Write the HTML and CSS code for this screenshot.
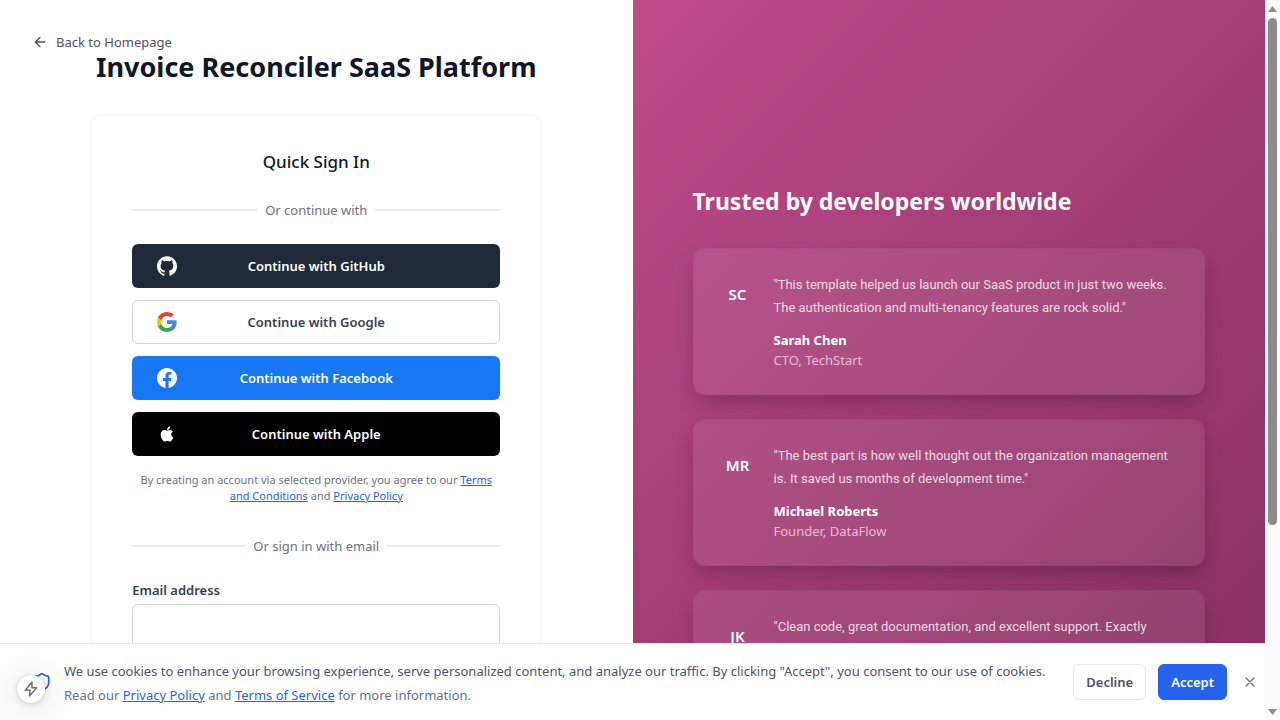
FILE: index.html
```html
<!DOCTYPE html>
<html lang="en">
<head>
<meta charset="utf-8">
<meta name="viewport" content="width=device-width, initial-scale=1">
<title>Invoice Reconciler SaaS Platform</title>
<link rel="stylesheet" href="styles.css">
</head>
<body>
<div class="shell">
  <div class="page">
    <main class="signin">
      <a class="back" href="#">
        <svg class="back-icon" viewBox="0 0 24 24" fill="none" stroke="currentColor" stroke-width="2" stroke-linecap="round" stroke-linejoin="round"><path d="m12 19-7-7 7-7M19 12H5"/></svg>
        Back to Homepage
      </a>
      <h1 class="title">Invoice Reconciler SaaS Platform</h1>
      <section class="card">
        <h2 class="card-title">Quick Sign In</h2>
        <div class="divider"><span>Or continue with</span></div>
        <div class="providers">
          <button class="provider github" type="button">
            <svg viewBox="0 0 24 24" fill="currentColor"><path d="M12 .297c-6.63 0-12 5.373-12 12 0 5.303 3.438 9.8 8.205 11.385.6.113.82-.258.82-.577 0-.285-.01-1.04-.015-2.04-3.338.724-4.042-1.61-4.042-1.61C4.422 18.07 3.633 17.7 3.633 17.7c-1.087-.744.084-.729.084-.729 1.205.084 1.838 1.236 1.838 1.236 1.07 1.835 2.809 1.305 3.495.998.108-.776.417-1.305.76-1.605-2.665-.3-5.466-1.332-5.466-5.93 0-1.31.465-2.38 1.235-3.22-.135-.303-.54-1.523.105-3.176 0 0 1.005-.322 3.3 1.23.96-.267 1.98-.399 3-.405 1.02.006 2.04.138 3 .405 2.28-1.552 3.285-1.23 3.285-1.23.645 1.653.24 2.873.12 3.176.765.84 1.23 1.91 1.23 3.22 0 4.61-2.805 5.625-5.475 5.92.42.36.81 1.096.81 2.22 0 1.606-.015 2.896-.015 3.286 0 .315.21.69.825.57C20.565 22.092 24 17.592 24 12.297c0-6.627-5.373-12-12-12"/></svg>
            <span>Continue with GitHub</span>
          </button>
          <button class="provider google" type="button">
            <svg viewBox="1 1 22 22"><path fill="#4285F4" d="M22.56 12.25c0-.78-.07-1.53-.2-2.25H12v4.26h5.92c-.26 1.37-1.04 2.53-2.21 3.31v2.77h3.57c2.08-1.92 3.28-4.74 3.28-8.09z"/><path fill="#34A853" d="M12 23c2.97 0 5.46-.98 7.28-2.66l-3.57-2.77c-.98.66-2.23 1.06-3.71 1.06-2.86 0-5.29-1.93-6.16-4.53H2.18v2.84C3.99 20.53 7.7 23 12 23z"/><path fill="#FBBC05" d="M5.84 14.09c-.22-.66-.35-1.36-.35-2.09s.13-1.43.35-2.09V7.07H2.18C1.43 8.55 1 10.22 1 12s.43 3.45 1.18 4.93l3.66-2.84z"/><path fill="#EA4335" d="M12 5.38c1.62 0 3.06.56 4.21 1.64l3.15-3.15C17.45 2.09 14.97 1 12 1 7.7 1 3.99 3.47 2.18 7.07l3.66 2.84c.87-2.6 3.3-4.53 6.16-4.53z"/></svg>
            <span>Continue with Google</span>
          </button>
          <button class="provider facebook" type="button">
            <svg viewBox="0 0 24 24" fill="currentColor"><path d="M24 12.073c0-6.627-5.373-12-12-12s-12 5.373-12 12c0 5.99 4.388 10.954 10.125 11.854v-8.385H7.078v-3.47h3.047V9.43c0-3.007 1.792-4.669 4.533-4.669 1.312 0 2.686.235 2.686.235v2.953H15.83c-1.491 0-1.956.925-1.956 1.874v2.25h3.328l-.532 3.47h-2.796v8.385C19.612 23.027 24 18.062 24 12.073z"/></svg>
            <span>Continue with Facebook</span>
          </button>
          <button class="provider apple" type="button">
            <svg viewBox="0 0 24 24" fill="currentColor"><path d="M17.05 20.28c-.98.95-2.05.8-3.08.35-1.09-.46-2.09-.48-3.24 0-1.44.62-2.2.44-3.06-.35C2.79 15.25 3.51 7.59 9.05 7.31c1.35.07 2.29.74 3.08.8 1.18-.24 2.31-.93 3.57-.84 1.51.12 2.65.72 3.4 1.8-3.12 1.87-2.38 5.98.48 7.13-.57 1.5-1.31 2.99-2.54 4.09zM12.03 7.25c-.15-2.23 1.66-4.07 3.74-4.25.29 2.58-2.34 4.5-3.74 4.25z"/></svg>
            <span>Continue with Apple</span>
          </button>
        </div>
        <p class="terms">By creating an account via selected provider, you agree to our <a href="#">Terms and Conditions</a> and <a href="#">Privacy Policy</a></p>
        <div class="divider"><span>Or sign in with email</span></div>
        <form class="form">
          <label for="email">Email address</label>
          <input id="email" type="email">
        </form>
      </section>
    </main>

    <aside class="praise">
      <h2 class="praise-title">Trusted by developers worldwide</h2>
      <article class="quote">
        <div class="avatar">SC</div>
        <div class="quote-body">
          <p class="quote-text">"This template helped us launch our SaaS product in just two weeks. The authentication and multi-tenancy features are rock solid."</p>
          <p class="name">Sarah Chen</p>
          <p class="role">CTO, TechStart</p>
        </div>
      </article>
      <article class="quote">
        <div class="avatar">MR</div>
        <div class="quote-body">
          <p class="quote-text">"The best part is how well thought out the organization management is. It saved us months of development time."</p>
          <p class="name">Michael Roberts</p>
          <p class="role">Founder, DataFlow</p>
        </div>
      </article>
      <article class="quote">
        <div class="avatar">JK</div>
        <div class="quote-body">
          <p class="quote-text">"Clean code, great documentation, and excellent support. Exactly</p>
        </div>
      </article>
    </aside>

    <section class="cookies" aria-label="Cookie consent">
      <svg class="shield" viewBox="0 0 24 24" fill="none" stroke="currentColor" stroke-width="2" stroke-linecap="round" stroke-linejoin="round"><path d="M20 13c0 5-3.500 7.500-7.660 8.950a1 1 0 0 1-.67-.01C7.500 20.500 4 18 4 13V6a1 1 0 0 1 1-1c2 0 4.500-1.200 6.240-2.720a1.170 1.170 0 0 1 1.520 0C14.510 3.810 17 5 19 5a1 1 0 0 1 1 1z"/></svg>
      <div class="cookies-text">
        <p>We use cookies to enhance your browsing experience, serve personalized content, and analyze our traffic. By clicking "Accept", you consent to our use of cookies.</p>
        <p class="muted">Read our <a href="#">Privacy Policy</a> and <a href="#">Terms of Service</a> for more information.</p>
      </div>
      <button class="btn decline" type="button">Decline</button>
      <button class="btn accept" type="button">Accept</button>
      <button class="close" type="button" aria-label="Close">
        <svg viewBox="0 0 24 24" fill="none" stroke="currentColor" stroke-width="2" stroke-linecap="round"><path d="M18 6 6 18M6 6l12 12"/></svg>
      </button>
    </section>

    <button class="bolt" type="button" aria-label="Developer tools">
      <svg viewBox="0 0 16 16" fill="none" stroke="currentColor" stroke-width="1.500" stroke-linejoin="round"><path d="M9 1 2.300 9.300H7L6.500 15 13.700 6.700H9z"/></svg>
    </button>
  </div>

  <div class="scrollbar" aria-hidden="true">
    <svg class="arrow" viewBox="0 0 11 8"><path d="M5.500 1 10 7H1z"/></svg>
    <div class="track"><div class="thumb"></div></div>
    <svg class="arrow" viewBox="0 0 11 8"><path d="M1 1h9L5.500 7z"/></svg>
  </div>
</div>
</body>
</html>
```
FILE: styles.css
```css
* { box-sizing: border-box; }

body {
  margin: 0;
  font-family: "Noto Sans", "Open Sans", sans-serif;
  font-size: 13px;
  line-height: 20px;
  color: #111827;
  background: #fff;
}

h1, h2, p { margin: 0; }
button { font: inherit; cursor: pointer; }
a { color: #2563eb; }

.shell { display: flex; height: 100vh; overflow: hidden; }

.page {
  position: relative;
  flex: 1;
  min-width: 0;
  display: grid;
  grid-template-columns: 1fr 1fr;
  overflow: hidden;
}

.signin {
  position: relative;
  padding: 48px 32px 0;
  display: flex;
  flex-direction: column;
  align-items: center;
}

.back {
  position: absolute;
  left: 32px;
  top: 32px;
  display: flex;
  align-items: center;
  gap: 8px;
  color: #4b5563;
  text-decoration: none;
}
.back-icon { width: 16px; height: 16px; }

.title {
  font-size: 27px;
  line-height: 38px;
  font-weight: 700;
  color: #0f172a;
}

.card {
  width: 100%;
  max-width: 448px;
  margin-top: 30px;
  padding: 32px 40px;
  border-radius: 8px;
  background: #fff;
  box-shadow: 0 0 3px rgba(0, 0, 0, 0.1);
}

.card-title {
  font-size: 17px;
  line-height: 28px;
  font-weight: 500;
  text-align: center;
}

.divider {
  display: flex;
  align-items: center;
  gap: 8px;
  margin-top: 24px;
  color: #6b7280;
}
.divider::before, .divider::after {
  content: "";
  flex: 1;
  height: 2px;
  background: #ececee;
}

.providers { display: grid; gap: 12px; margin-top: 24px; }
.provider {
  display: grid;
  grid-template-columns: 20px 1fr 20px;
  align-items: center;
  height: 44px;
  padding: 0 24px;
  border: 1px solid transparent;
  border-radius: 6px;
  font-weight: 600;
  color: #fff;
}
.provider svg { width: 20px; height: 20px; }
.github { background: #1f2937; }
.google { background: #fff; border-color: #d1d5db; color: #374151; }
.facebook { background: #1877f2; }
.apple { background: #000; }

.terms {
  margin-top: 16px;
  font-size: 11px;
  line-height: 16px;
  text-align: center;
  color: #6b7280;
}
.terms + .divider { margin-top: 32px; }

.form { margin-top: 24px; }
.form label { display: block; font-weight: 600; color: #374151; }
.form input {
  display: block;
  width: 100%;
  height: 48px;
  margin-top: 4px;
  padding: 8px 12px;
  border: 1px solid #d1d5db;
  border-radius: 6px;
  font: inherit;
}

.praise {
  display: flex;
  flex-direction: column;
  gap: 24px;
  padding: 184px 60px 0;
  overflow: hidden;
  color: #fff;
  background: linear-gradient(135deg, #be4b8a 0%, #853060 100%);
}
.praise-title {
  font-size: 23px;
  line-height: 34px;
  margin-bottom: 6px;
  font-weight: 700;
}

.quote {
  display: flex;
  flex-shrink: 0;
  gap: 16px;
  min-height: 147px;
  padding: 24px;
  border: 1px solid rgba(255, 255, 255, 0.06);
  border-radius: 12px;
  background: rgba(255, 255, 255, 0.08);
  background-clip: padding-box;
  box-shadow: 0 10px 20px -4px rgba(40, 10, 35, 0.3);
}
.avatar {
  width: 40px;
  height: 42px;
  flex-shrink: 0;
  font-size: 15px;
  line-height: 42px;
  font-weight: 600;
  text-align: center;
}
.quote-body { flex: 1; min-width: 0; }
.quote-text {
  font-family: Roboto, "Noto Sans", sans-serif;
  line-height: 23px;
  color: rgba(255, 255, 255, 0.8);
}
.name { margin-top: 11px; font-weight: 700; }
.role { color: #f0b8d8; }

.cookies {
  position: absolute;
  left: 0;
  right: 0;
  bottom: 0;
  display: flex;
  align-items: center;
  padding: 13px 0 13px 32px;
  border-top: 1px solid #e5e7eb;
  background: #fff;
}
.shield { width: 20px; height: 20px; flex-shrink: 0; margin-right: 12px; color: #2563eb; }
.cookies-text { flex: 1; min-width: 0; padding-top: 2px; line-height: 24px; color: #4b5563; }
.muted { color: #6b7280; }
.btn {
  height: 36px;
  padding: 0 12px;
  margin-left: 12px;
  border: 1px solid #e5e7eb;
  border-radius: 6px;
  background: #fff;
  font-weight: 600;
  color: #4b5563;
}
.accept { border-color: #2563eb; background: #2563eb; color: #fff; }
.close {
  display: grid;
  place-items: center;
  width: 30px;
  height: 28px;
  margin-left: 8px;
  padding: 0;
  border: 0;
  background: none;
  color: #6b7280;
}
.close svg { width: 16px; height: 16px; }

.bolt {
  position: absolute;
  left: 17px;
  bottom: 17px;
  display: grid;
  place-items: center;
  width: 28px;
  height: 28px;
  padding: 0;
  border: 0;
  border-radius: 50%;
  background: #fff;
  color: #737373;
  box-shadow: 0 0 2px rgba(0, 0, 0, 0.2), 0 2px 8px rgba(0, 0, 0, 0.12), 0 4px 40px rgba(0, 0, 0, 0.18);
}
.bolt svg { width: 16px; height: 16px; }

.scrollbar {
  width: 15px;
  display: flex;
  flex-direction: column;
  align-items: center;
  padding: 5px 0 4px;
  background: #fcfcfc;
}
.arrow { width: 11px; height: 8px; fill: #8b8b8b; }
.track { flex: 1; padding: 5px 0; }
.thumb { width: 9px; height: 74%; min-height: 24px; border-radius: 5px; background: #8b8b8b; }
```
